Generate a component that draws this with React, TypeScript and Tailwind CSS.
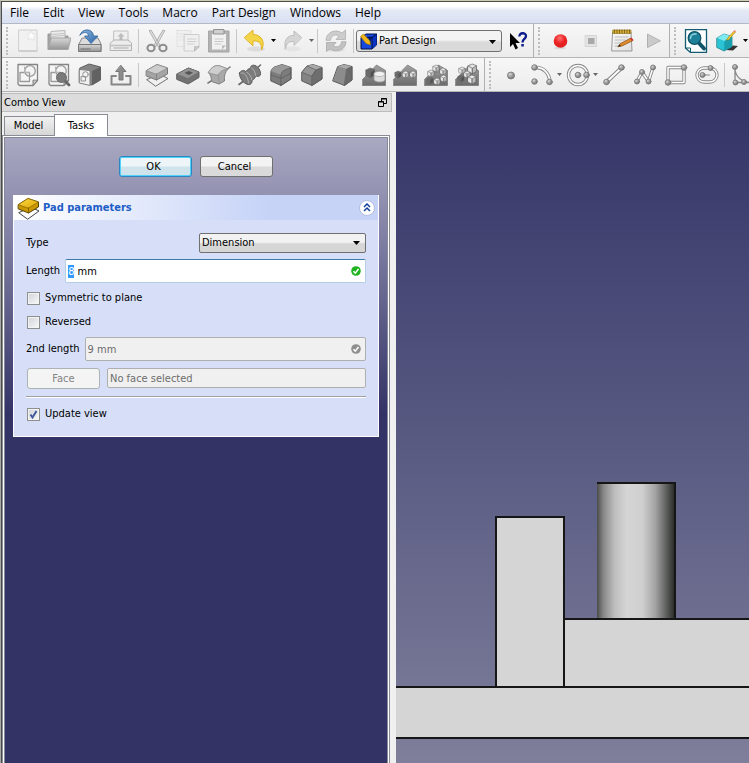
import { useEffect, useRef, type ReactNode } from "react";

const UI_FONT = "font-['DejaVu_Sans_Condensed','DejaVu_Sans',sans-serif]";

/* ---------- shared bits ---------- */

function Icon({ children }: { children: ReactNode }) {
  return (
    <svg viewBox="0 0 24 24" className="block size-6 shrink-0" fill="none" strokeLinejoin="round" strokeLinecap="round">
      {children}
    </svg>
  );
}

function Tool({ label, children }: { label: string; children: ReactNode }) {
  return (
    <button type="button" aria-label={label} className="flex h-8 w-[31px] shrink-0 items-center justify-center">
      <Icon>{children}</Icon>
    </button>
  );
}

function DropArrow({ label, dark = false, narrow = false }: { label: string; dark?: boolean; narrow?: boolean }) {
  return (
    <button
      type="button"
      aria-label={label}
      className={`flex h-8 shrink-0 items-center justify-center ${narrow ? "w-[5px]" : "w-[7px]"}`}
    >
      <svg viewBox="0 0 5 3" className="block h-[3px] w-[5px] shrink-0">
        <path d="M0 0h5L2.500 3z" fill={dark ? "#000" : "#666"} />
      </svg>
    </button>
  );
}

function Handle() {
  return (
    <div className="flex w-[10px] shrink-0 items-center justify-center">
      <div className="h-7 border-l-2 border-dotted border-[#bdbdbd]" />
    </div>
  );
}

function Separator() {
  return (
    <div className="flex w-[5px] shrink-0 items-center justify-center">
      <div className="h-6 w-px bg-[#c8c8c8]" />
    </div>
  );
}

function Edge() {
  return <div className="h-full w-px shrink-0 bg-[#b0b0b0]" />;
}

function Gradients() {
  return (
    <svg className="absolute size-0" aria-hidden="true">
      <defs>
        <radialGradient id="ball" cx="35%" cy="30%" r="75%">
          <stop offset="0" stopColor="#d8d8d8" />
          <stop offset="0.6" stopColor="#949494" />
          <stop offset="1" stopColor="#727272" />
        </radialGradient>
        <radialGradient id="red" cx="45%" cy="30%" r="75%">
          <stop offset="0" stopColor="#ff7373" />
          <stop offset="0.5" stopColor="#ec2222" />
          <stop offset="1" stopColor="#d92020" />
        </radialGradient>
        <linearGradient id="paper" x1="0" y1="0" x2="1" y2="1">
          <stop offset="0" stopColor="#fafafa" />
          <stop offset="1" stopColor="#dedede" />
        </linearGradient>
        <linearGradient id="metal" x1="0" y1="0" x2="0" y2="1">
          <stop offset="0" stopColor="#d8d8d8" />
          <stop offset="1" stopColor="#949494" />
        </linearGradient>
        <linearGradient id="darkface" x1="0" y1="0" x2="0" y2="1">
          <stop offset="0" stopColor="#a0a0a0" />
          <stop offset="1" stopColor="#6c6c6c" />
        </linearGradient>
        <linearGradient id="gold" x1="0" y1="0" x2="1" y2="1">
          <stop offset="0" stopColor="#fbdc4a" />
          <stop offset="1" stopColor="#e0a400" />
        </linearGradient>
        <linearGradient id="blue" x1="0" y1="0" x2="1" y2="1">
          <stop offset="0" stopColor="#8db8de" />
          <stop offset="1" stopColor="#2f66a8" />
        </linearGradient>
      </defs>
    </svg>
  );
}

function Ball({ x, y, r = 2.8 }: { x: number; y: number; r?: number }) {
  return <circle cx={x} cy={y} r={r} fill="url(#ball)" stroke="#7c7c7c" strokeWidth="0.9" />;
}

function SketchPage() {
  return (
    <>
      <path d="M2 1.500h19.500v16L17 22.500H3.500L2 21z" fill="#f4f4f4" stroke="#858585" strokeWidth="1.300" />
      <path d="M21.500 17.500L17 22.500v-5z" fill="#c4c4c4" stroke="#808080" />
      <rect x="4" y="9.500" width="9.500" height="9" stroke="#9a9a9a" strokeWidth="1.300" />
      <circle cx="14" cy="8" r="5.300" stroke="#9a9a9a" strokeWidth="1.300" />
      <path d="M8.500 9.500V4M13.500 9.500H9" stroke="#b4b4b4" />
    </>
  );
}

function MiniCube({ x, y, dark = false, s = 1 }: { x: number; y: number; dark?: boolean; s?: number }) {
  return (
    <g transform={`translate(${x} ${y}) scale(${s})`} stroke="#666" strokeWidth="0.5">
      <path d="M0 1.500L3 0l3 1.200v4L3.200 7 0 5.500z" fill={dark ? "#6c6c6c" : "#e8e8e8"} />
      <path d="M3.200 3L6 1.200v4L3.200 7z" fill={dark ? "#505050" : "#bcbcbc"} />
      <path d="M0 1.500L3.200 3v4" />
    </g>
  );
}

function Wedge() {
  return <path d="M.5 16.500L14.500 2l9 5.500v15H.5z" fill="url(#darkface)" stroke="#7a7a7a" strokeWidth="0.8" />;
}

/* ---------- menu and toolbars ---------- */

function MenuBar() {
  const items = ["File", "Edit", "View", "Tools", "Macro", "Part Design", "Windows", "Help"];
  return (
    <nav className="flex h-[22px] items-center gap-3.5 border-b border-[#b5b9c6] bg-linear-to-b from-white from-20% via-[#e4e9f5] via-40% to-[#d8e0f3] pl-2 font-['Open_Sans','Noto_Sans',sans-serif] text-xs text-black">
      {items.map((item) => (
        <button key={item} type="button" className="shrink-0">
          {item}
        </button>
      ))}
    </nav>
  );
}

function FileToolBar() {
  return (
    <div className="flex h-[34px] items-center overflow-hidden border-b border-[#b4b4b4] bg-linear-to-b from-[#f7f7f7] to-[#ececec]">
      <Handle />
      <Tool label="New">
        <path d="M3 1h18v21H3z" fill="#f1f1f1" stroke="#cfcfcf" />
        <path d="M15 2l1.500 3 3.500.5-2.500 2.500.5 3.500-3-2-3 1.500 1-3.500L11 5l3-.5z" fill="#fcfcfc" stroke="#dadada" strokeWidth="0.6" />
        <path d="M3 22h18" stroke="#bdbdbd" />
      </Tool>
      <Tool label="Open">
        <path d="M1 20V5h8l2 2h10v13z" fill="#a4a4a4" stroke="#999" />
        <path d="M4 9V2.500l14-1V9" fill="#ececec" stroke="#b5b5b5" />
        <path d="M5 5.500l12-1M5 7.500l12-1" stroke="#c2c2c2" />
        <path d="M4.500 9H24l-3 11.500H1.500z" fill="url(#metal)" stroke="#a4a4a4" />
      </Tool>
      <Tool label="Save">
        <path d="M1 15l3-6h16l3 6v7.500H1z" fill="#dcdcdc" stroke="#888" />
        <path d="M1 15.500h22v7H1z" fill="url(#metal)" stroke="#777" />
        <path d="M3 20h10" stroke="#666" strokeDasharray="1 1" />
        <path d="M2 6C4-1 15-1 15.500 7H20l-7 7.500L6.500 7h4C10 3 6 2 2 6z" fill="url(#blue)" stroke="#2f66a0" strokeWidth="0.8" />
      </Tool>
      <Tool label="Print">
        <path d="M5 2h14v11H5z" fill="#efefef" stroke="#c2c2c2" />
        <path d="M12 4l3.500 3.500h-2V11h-3V7.500h-2z" fill="#bcbcbc" />
        <path d="M1.500 14L5 11h14l3.500 3v7.500h-21z" fill="#ececec" stroke="#b2b2b2" />
        <path d="M2 16.500h20M5 19h14" stroke="#c0c0c0" strokeWidth="1.300" />
      </Tool>
      <Separator />
      <Tool label="Cut">
        <path d="M4.500 1.500L6 1l9.500 16-2 .5zM19.500 1.500L18 1 8.500 17l2 .5z" fill="#e0e0e0" stroke="#a0a0a0" strokeWidth="0.8" />
        <ellipse cx="6" cy="19" rx="3.600" ry="3.200" stroke="#8e8e8e" strokeWidth="2" />
        <ellipse cx="18" cy="19" rx="3.600" ry="3.200" stroke="#8e8e8e" strokeWidth="2" />
      </Tool>
      <Tool label="Copy">
        <path d="M1 1.500h14v16H1z" fill="#f0f0f0" stroke="#dcdcdc" strokeDasharray="2 1.500" />
        <path d="M3 5h9M3 8h9M3 11h9" stroke="#e2e2e2" />
        <path d="M8.500 5.500H23V18l-4.500 4h-10z" fill="#efefef" stroke="#cdcdcd" />
        <path d="M11.500 10H20M11.500 12.500H20M11.500 15H18" stroke="#d0d0d0" />
        <path d="M23 18l-4.500 4v-4z" fill="#ccc" stroke="#bbb" />
      </Tool>
      <Tool label="Paste">
        <path d="M2 2h20v21H2z" fill="#b4b4b4" stroke="#a2a2a2" />
        <path d="M5 5h14v15.500H5z" fill="#f1f1f1" />
        <path d="M7 .5h10V5H7z" fill="#cfcfcf" stroke="#909090" />
        <path d="M8 10h8M8 12.500h8M8 15h6" stroke="#c8c8c8" />
        <path d="M19 16.500l-4 4v-4z" fill="#bbb" />
      </Tool>
      <Separator />
      <Tool label="Undo">
        <ellipse cx="13" cy="20" rx="9" ry="2.500" fill="#dcdcdc" />
        <path d="M1.500 8.500L10 1v4.500c8 0 13 7 8.500 15.500C19 14 15.500 11.500 10 12v4.500z" fill="#f5d548" stroke="#dfb428" />
      </Tool>
      <DropArrow label="Undo history" dark />
      <Tool label="Redo">
        <ellipse cx="11" cy="20" rx="9" ry="2.500" fill="#e4e4e4" />
        <path d="M20.500 8.500L13 2v4.500C6 6 2.500 12 4.500 20 5.500 14 8 12 13 12.500V16z" fill="#d5d5d5" stroke="#bcbcbc" />
      </Tool>
      <DropArrow label="Redo history" />
      <Separator />
      <Tool label="Refresh">
        <ellipse cx="12" cy="21" rx="9" ry="2" fill="#e0e0e0" />
        <path d="M2 11C2 3 12-.5 18 4l3.500-3v9.500H12L15 7C10.500 4.500 7 7 6.500 11z" fill="#cdcdcd" stroke="#b0b0b0" strokeWidth="0.8" />
        <path d="M22 13c0 8-10 11-16 7l-3.500 2.500V13.500H12L9 17c4.500 2 8 0 8.500-4z" fill="#c2c2c2" stroke="#aaa" strokeWidth="0.8" />
      </Tool>
      <Separator />
      <div className="relative w-[146px] shrink-0">
        <select
          aria-label="Workbench"
          className={`block h-[22px] w-full appearance-none rounded-[3px] border border-[#707070] bg-linear-to-b from-[#f4f4f4] from-45% to-[#dadada] to-55% pt-px pl-[22px] text-[11px] text-black ${UI_FONT}`}
        >
          <option>Part Design</option>
        </select>
        <svg viewBox="0 0 18 17" className="pointer-events-none absolute top-[3px] left-1 h-[17px] w-[18px]">
          <path d="M1 4.500L6 1h10.500v11L12 16H1z" fill="#1748e0" stroke="#001046" />
          <path d="M12 4.500L16.500 1v11L12 16z" fill="#0b35c0" />
          <path d="M1 4.500h11V16M12 4.500L16.500 1" stroke="#001046" fill="none" />
          <path d="M7.500 4.500h5M10 4.500V12" stroke="#001046" strokeWidth="1.500" fill="none" />
          <path d="M.5 3.500L3.500 1l6.500 7 .5 4-4.500-1.500z" fill="#f1b51c" stroke="#9c7300" strokeWidth="0.6" />
        </svg>
        <svg viewBox="0 0 7 4" className="pointer-events-none absolute top-[10px] right-[6px] h-1 w-[7px]">
          <path d="M0 0h7L3.500 4z" fill="#000" />
        </svg>
      </div>
      <Tool label="What's this?">
        <path d="M4 4v14l3-3 2.500 5.500 2.500-1.500L9.500 14H14z" fill="#000" />
        <path d="M13.500 7.500C13 3.500 20 3 20 7c0 3-3.500 3-3.500 6.500" stroke="#0c1a8c" strokeWidth="2.300" strokeLinecap="butt" />
        <path d="M15.300 15h2.500v2.500h-2.500z" fill="#0c1a8c" />
      </Tool>
      <Edge />
      <Handle />
      <Tool label="Record macro">
        <ellipse cx="12" cy="19" rx="6" ry="1.500" fill="#dcdcdc" />
        <circle cx="12.500" cy="12" r="6.800" fill="url(#red)" />
      </Tool>
      <Tool label="Stop macro">
        <path d="M6.500 6.500h11v11h-11z" fill="#e4e4e4" stroke="#d4d4d4" />
        <path d="M9 9h6.500v6H9z" fill="#a9a9a9" />
      </Tool>
      <Tool label="Macros">
        <path d="M3 3h18l1 19H2z" fill="url(#paper)" stroke="#9a9a9a" />
        <path d="M3 1h18v3.500H3z" fill="#d9b13a" stroke="#8a6a12" strokeWidth="0.6" />
        <path d="M4.500 1v3M7 1v3M9.500 1v3M12 1v3M14.500 1v3M17 1v3M19.500 1v3" stroke="#6f5510" strokeWidth="0.8" />
        <path d="M5 8h13M5 11h10M5 14h7M5 17h5" stroke="#bcbcbc" />
        <path d="M8 17.500l2.500-3L21 9l2 2.500-11 5.500z" fill="#e38a2d" stroke="#7c4a10" strokeWidth="0.7" />
        <path d="M8 17.500l1.500-2 1.500 1.500z" fill="#222" />
        <path d="M20 9.500l1.500-1L23.500 11 22 12z" fill="#c33" />
      </Tool>
      <Tool label="Execute macro">
        <path d="M6.500 5.500v13L19 12z" fill="#cacaca" stroke="#b0b0b0" />
      </Tool>
      <div className="w-px shrink-0" />
      <Edge />
      <Handle />
      <Tool label="Fit all">
        <path d="M1.500.5h21v23h-16l-5-4.500z" fill="#fff" stroke="#135d70" strokeWidth="1.300" />
        <path d="M1.500 19h5v4.500" stroke="#135d70" />
        <path d="M14 13l6 6.500" stroke="#0f5468" strokeWidth="4" />
        <circle cx="10.500" cy="9" r="6.300" fill="#1f8197" stroke="#0f5468" strokeWidth="1.300" />
        <path d="M6.500 9.500C6.500 6 9 4.500 12 5" stroke="#8fd3e0" strokeWidth="1.500" />
      </Tool>
      <Tool label="Draw style">
        <path d="M11 21l7-4.500 5 .5-5 4.500z" fill="#333" />
        <path d="M2 9l7-4 8 2.500v10L9 22l-7-3.500z" fill="#2cc4d4" stroke="#16808c" strokeWidth="0.8" />
        <path d="M2 9l7-4 8 2.500L9.500 12z" fill="#7feaf2" />
        <path d="M9.500 12L17 7.500v10L9 22z" fill="#1a9fae" />
        <path d="M11.500 10.500L19 2l1.500 1-7 8z" fill="#f6c62c" stroke="#9a7300" strokeWidth="0.5" />
        <path d="M18.500 2.500L19.500 1l1.500 1-1 1.500z" fill="#f08a7c" />
      </Tool>
      <DropArrow label="Draw style options" dark />
    </div>
  );
}

function PartToolBar() {
  return (
    <div className="flex h-[34px] items-center overflow-hidden border-b border-[#b4b4b4] bg-linear-to-b from-[#f7f7f7] to-[#ececec]">
      <Handle />
      <Tool label="Create sketch">
        <SketchPage />
      </Tool>
      <Tool label="View sketch">
        <SketchPage />
        <path d="M17 17l5 5" stroke="#666" strokeWidth="2.800" />
        <circle cx="14.500" cy="14.500" r="5" fill="#7a7a7a" stroke="#6a6a6a" />
      </Tool>
      <Tool label="Map sketch to face">
        <path d="M2 5l9-4 11.500 3v13L14 22 2 19z" fill="#858585" stroke="#606060" />
        <path d="M14 8l8.500-4v13L14 22z" fill="#626262" />
        <path d="M1.500 6.500l10.500 1v15L1.500 20z" fill="#f0f0f0" stroke="#808080" />
        <circle cx="7.500" cy="11.500" r="2.800" stroke="#909090" />
        <path d="M3.500 13.500h4v4.500h-4z" stroke="#909090" />
      </Tool>
      <Tool label="Leave sketch">
        <path d="M7 13H2.500v8.500h19V13H17" stroke="#868686" strokeWidth="2" />
        <path d="M12 2.500l5 6h-3V17h-4V8.500H7z" fill="#8c8c8c" stroke="#787878" />
      </Tool>
      <Separator />
      <Tool label="Pad">
        <path d="M2 16.500L14 11l9 4.500L11 23z" fill="#f0f0f0" stroke="#707070" />
        <path d="M1.500 7.500L12 1.500 22.500 5v6l-11 6-10-4z" fill="#a4a4a4" stroke="#787878" />
        <path d="M1.500 7.500L12 1.500 22.500 5l-11 6z" fill="#cdcdcd" stroke="#8a8a8a" strokeWidth="0.7" />
        <path d="M11.500 11v6" stroke="#777" strokeWidth="0.7" />
      </Tool>
      <Tool label="Pocket">
        <path d="M1 11L12.500 5l10.500 4v5.500L12 21 1 16.500z" fill="#727272" stroke="#606060" />
        <path d="M1 11L12.500 5 23 9l-11 6.500z" fill="#949494" stroke="#6e6e6e" strokeWidth="0.7" />
        <path d="M8.500 10L12.500 8l4.500 1.500-4 2.500z" fill="#545454" />
      </Tool>
      <Tool label="Revolution">
        <path d="M1 20L5 17.500M18 8l5-4" stroke="#7a7a7a" strokeWidth="1.600" />
        <path d="M1.500 9.500C4 4 9 1.500 13 3l8 3c-3 3-4 7-3.500 12L12 21 4.500 18.500C4.500 14.500 3.500 11.500 1.500 9.500z" fill="#a8a8a8" stroke="#808080" />
        <path d="M1.500 9.500C4 4 9 1.500 13 3l8 3c-4 0-8 2-10 6z" fill="#cecece" stroke="#909090" strokeWidth="0.7" />
        <path d="M11 12c1 2.500 1.200 5.500 1 9" stroke="#909090" strokeWidth="0.8" />
      </Tool>
      <Tool label="Groove">
        <path d="M1 21.500l4-3M18 6l4.500-4" stroke="#666" strokeWidth="1.600" />
        <path d="M1.500 10c1.500-3 5-3.500 6.500-1 .5-2 2.500-3.500 4.500-3.500C12 3 14.500 1.500 17 2.500c3 1 6 5 5.500 9.500-1.500 2-4 1.500-5 .5 0 2.500-1.500 4-3.500 4.500.5 3-1.500 5-4 4.500C5.500 20.500 1 15 1.500 10z" fill="#7c7c7c" stroke="#5a5a5a" />
        <path d="M3 10c3-1 7 3 7.500 10M8.500 9c2 1 5 4 5.500 8M13.500 5c2 1 4 4 4 7.500" stroke="#b0b0b0" />
      </Tool>
      <Tool label="Fillet">
        <path d="M2 8c1-3 3-4 5-4.500L13 1.500l9 3V16L12 22.500 2 18z" fill="#7c7c7c" stroke="#5a5a5a" />
        <path d="M2 8c1-3 3-4 5-4.500L13 1.500l9 3-6 2.500c-2.500 1-4 2.500-4 5z" fill="#999" />
        <path d="M12 12c0-2.500 1.500-4 4-5l6-2.500V16L12 22.500zM2 12l10 3.500L22 10" stroke="#5a5a5a" strokeWidth="0.7" />
      </Tool>
      <Tool label="Chamfer">
        <path d="M2 9l5-6 6-1.500 9 3V16L12 22.500 2 18z" fill="#848484" stroke="#5a5a5a" />
        <path d="M7 3l6-1.500 9 3L16 7z" fill="#a8a8a8" />
        <path d="M2 9l5-6 9 4-4 6z" fill="#949494" stroke="#626262" strokeWidth="0.7" />
        <path d="M12 13l4-6 6-2.500V16L12 22.500z" fill="#6e6e6e" stroke="#5a5a5a" strokeWidth="0.7" />
      </Tool>
      <Tool label="Draft">
        <path d="M7 3.500L13 1.500l8 2V17l-7.500 5.500L2 18z" fill="#8c8c8c" stroke="#5a5a5a" />
        <path d="M7 3.500L13 1.500l8 2-5 2.500z" fill="#a9a9a9" />
        <path d="M16 6l5-2.500V17l-7.500 5.500z" fill="#6a6a6a" stroke="#5a5a5a" strokeWidth="0.7" />
      </Tool>
      <Tool label="Mirrored">
        <Wedge />
        <MiniCube x={4} y={5} s={1.4} dark />
        <path d="M12 11c0-3.500 11-3.500 11 0v5.500c0 3.500-11 3.500-11 0z" fill="#dcdcdc" stroke="#909090" strokeWidth="0.8" />
        <ellipse cx="17.500" cy="11" rx="5.500" ry="2.600" fill="#f0f0f0" stroke="#a0a0a0" strokeWidth="0.6" />
      </Tool>
      <Tool label="Linear pattern">
        <path d="M.5 16.500L14.500 2l9 5.500v15H.5z" fill="url(#darkface)" stroke="#7a7a7a" strokeWidth="0.8" />
        <MiniCube x={2} y={8} dark />
        <MiniCube x={9.500} y={8} />
        <MiniCube x={17} y={8} />
      </Tool>
      <Tool label="Polar pattern">
        <Wedge />
        <MiniCube x={9} y={2} />
        <MiniCube x={16} y={5} />
        <MiniCube x={4} y={7} />
        <MiniCube x={16.500} y={12} />
        <MiniCube x={10} y={15} />
        <MiniCube x={3} y={14} dark />
      </Tool>
      <Tool label="Multi transform">
        <Wedge />
        <MiniCube x={13} y={1} s={1.4} />
        <MiniCube x={4} y={4} />
        <MiniCube x={3} y={12} dark />
        <MiniCube x={9} y={8} />
        <MiniCube x={13} y={12} s={1.3} />
      </Tool>
      <div className="w-0.5 shrink-0" />
      <Edge />
      <Handle />
      <Tool label="Point">
        <Ball x={12} y={12.500} r={3.500} />
      </Tool>
      <Tool label="Arc">
        <path d="M5 4.500c8-.5 14 5 15 14" stroke="#888" strokeWidth="3.500" />
        <path d="M5 4.500c8-.5 14 5 15 14" stroke="#fff" strokeWidth="1.700" />
        <Ball x={4.500} y={4.500} />
        <Ball x={4.500} y={18.500} />
        <Ball x={19.500} y={19} />
      </Tool>
      <DropArrow label="Arc options" narrow />
      <Tool label="Circle">
        <circle cx="12" cy="12" r="9.500" stroke="#888" strokeWidth="3.300" />
        <circle cx="12" cy="12" r="9.500" stroke="#fff" strokeWidth="1.600" />
        <Ball x={12} y={12} />
        <Ball x={20.500} y={12} />
      </Tool>
      <DropArrow label="Circle options" narrow />
      <Tool label="Line">
        <path d="M4.500 19L20 4.500" stroke="#888" strokeWidth="4" />
        <path d="M4.500 19L20 4.500" stroke="#fff" strokeWidth="1.800" />
        <Ball x={4.500} y={19} />
        <Ball x={19.500} y={4.500} />
      </Tool>
      <Tool label="Polyline">
        <path d="M4 18.500L9 9l6.500 9.500L20 4.500" stroke="#888" strokeWidth="3.300" />
        <path d="M4 18.500L9 9l6.500 9.500L20 4.500" stroke="#fff" strokeWidth="1.500" />
        <Ball x={4} y={18.500} r={2.500} />
        <Ball x={9} y={9} r={2.500} />
        <Ball x={15.500} y={18.500} r={2.500} />
        <Ball x={20} y={4.500} r={2.500} />
      </Tool>
      <Tool label="Rectangle">
        <path d="M4 4.500h16v15H4z" stroke="#888" strokeWidth="3.300" />
        <path d="M4 4.500h16v15H4z" stroke="#fff" strokeWidth="1.500" />
        <Ball x={20} y={4.500} />
        <Ball x={4} y={19.500} />
      </Tool>
      <Tool label="Slot">
        <rect x="2" y="5" width="20" height="14" rx="7" stroke="#888" strokeWidth="3.300" />
        <rect x="2" y="5" width="20" height="14" rx="7" stroke="#fff" strokeWidth="1.500" />
        <path d="M7.500 12h7" stroke="#888" />
        <Ball x={7.500} y={12} r={2.500} />
        <Ball x={15.500} y={5} r={2.500} />
      </Tool>
      <Separator />
      <Tool label="Fillet sketch">
        <path d="M4 4v15.500h18M4 7c1 7 7 12 15 12.500" stroke="#888" strokeWidth="1.300" />
        <Ball x={4} y={4} r={2.500} />
        <Ball x={4.500} y={19.500} r={2.500} />
        <Ball x={13} y={19} r={2.500} />
      </Tool>
    </div>
  );
}

/* ---------- task panel ---------- */

function CheckBox({ id, label, checked = false }: { id: string; label: string; checked?: boolean }) {
  return (
    <div className="flex h-6 items-center gap-[5px] pl-px">
      <span className="relative block size-[13px]">
        <input
          id={id}
          type="checkbox"
          defaultChecked={checked}
          className="peer block size-[13px] appearance-none border border-[#8e8f8f] bg-linear-to-br from-[#cfd2d8] to-[#fafafa] shadow-[inset_0_0_0_1px_#f4f4f4]"
        />
        <svg viewBox="0 0 13 13" className="pointer-events-none invisible absolute inset-0 size-[13px] peer-checked:visible">
          <path d="M3.500 6.500L5.500 9.500 9.500 3" fill="none" stroke="#40589c" strokeWidth="2" />
        </svg>
      </span>
      <label htmlFor={id}>{label}</label>
    </div>
  );
}

function Valid({ fill }: { fill: string }) {
  return (
    <svg viewBox="0 0 10 10" className="pointer-events-none absolute top-[7px] right-[5px] size-[10px]">
      <circle cx="5" cy="5" r="4.800" fill={fill} />
      <path d="M2.500 5.200l1.800 2L7.500 3" fill="none" stroke="#fff" strokeWidth="1.500" />
    </svg>
  );
}

function PadParameters() {
  const length = useRef<HTMLInputElement>(null);
  useEffect(() => {
    length.current?.focus();
    length.current?.setSelectionRange(0, 1);
  }, []);

  return (
    <section className="mx-2 mt-[18px] border border-t-0 border-white bg-[#d6dff7]">
      <header className="flex h-[25px] items-center bg-linear-to-r from-white to-[#c6d3f7] to-70% pr-[3px] pl-[3px]">
        <Icon>
          <path d="M2 16.500L14 11l8 4L11 23z" fill="#fff" stroke="#444" />
          <path d="M1.500 8.500L11 2.500 21.500 6v5L11.500 17l-10-4z" fill="#c99700" stroke="#5a4300" />
          <path d="M1.500 8.500L11 2.500 21.500 6l-10 6z" fill="url(#gold)" stroke="#8a6800" strokeWidth="0.7" />
          <path d="M11.500 12v5" stroke="#6d5200" strokeWidth="0.7" />
        </Icon>
        <h2 className="ml-0.5 flex-1 pt-px font-bold text-[#215dc6]">Pad parameters</h2>
        <button
          type="button"
          aria-label="Collapse"
          className="flex size-4 items-center justify-center rounded-full border border-[#b4bfdf] bg-white"
        >
          <svg viewBox="0 0 8 9" className="block h-[9px] w-2 shrink-0" fill="none" stroke="#1240a0" strokeWidth="1.500">
            <path d="M1 4l3-3 3 3M1 8l3-3 3 3" />
          </svg>
        </button>
      </header>

      <div className="pt-[13px] pr-3 pb-2.5 pl-3">
        <div className="flex h-5 items-center justify-between">
          <label htmlFor="type">Type</label>
          <div className="relative w-[167px]">
            <select
              id="type"
              className="block h-5 w-full appearance-none rounded-[2px] border border-[#707070] bg-linear-to-b from-[#f2f2f2] from-45% to-[#d6d6d6] to-55% pl-0.5"
            >
              <option>Dimension</option>
            </select>
            <svg viewBox="0 0 7 4" className="pointer-events-none absolute top-2 right-[6px] h-1 w-[7px]">
              <path d="M0 0h7L3.500 4z" fill="#000" />
            </svg>
          </div>
        </div>

        <div className="mt-[6px] flex h-6 items-center gap-[5px]">
          <label htmlFor="length" className="shrink-0">
            Length
          </label>
          <div className="relative flex-1">
            <input
              id="length"
              ref={length}
              defaultValue="8 mm"
              className="block h-6 w-full rounded-[2px] border border-[#b5cfe7] border-t-[#3d7bad] bg-white pl-0.5 outline-none selection:bg-[#3399ff] selection:text-white"
            />
            <Valid fill="#1fb41f" />
          </div>
        </div>

        <div className="mt-[3px]">
          <CheckBox id="symmetric" label="Symmetric to plane" />
          <CheckBox id="reversed" label="Reversed" />
        </div>

        <div className="mt-[3px] flex h-6 items-center gap-[5px]">
          <label htmlFor="length2" className="shrink-0">
            2nd length
          </label>
          <div className="relative flex-1">
            <input
              id="length2"
              disabled
              defaultValue="9 mm"
              className="block h-6 w-full rounded-[2px] border border-[#afafaf] bg-[#f0f0f0] pl-0.5 text-[#6d6d6d]"
            />
            <Valid fill="#8f8f8f" />
          </div>
        </div>

        <div className="mt-[7px] flex items-start gap-[7px] pl-px">
          <button
            type="button"
            disabled
            className="h-[21px] w-[73px] shrink-0 rounded-[3px] border border-[#adb2b5] bg-[#f4f4f4] text-[#838383]"
          >
            Face
          </button>
          <input
            aria-label="Selected face"
            disabled
            defaultValue="No face selected"
            className="block h-5 min-w-0 flex-1 rounded-[2px] border border-[#afafaf] bg-[#f0f0f0] pl-0.5 text-[#6d6d6d]"
          />
        </div>

        <hr className="mt-[7px] mb-1 h-0.5 border-t border-b border-t-[#a0a0a0] border-b-white" />
        <CheckBox id="update" label="Update view" checked />
      </div>
    </section>
  );
}

function ComboView() {
  return (
    <aside
      className={`flex w-[394px] shrink-0 flex-col bg-[#f0f0f0] pt-px pr-[6px] text-[11px] leading-[18px] text-black ${UI_FONT}`}
    >
      <div className="mr-[-2px] flex h-[19px] items-center justify-between border border-l-0 border-[#bcbcbc] bg-[#dcdcdc] pr-1 pl-0.5">
        <span className="pt-px">Combo View</span>
        <button type="button" aria-label="Float panel">
          <svg viewBox="0 0 9 9" className="block size-[9px]" fill="none" stroke="#000">
            <path d="M3.500 3V.5h5v5H6M3 1h6" />
            <path d="M.5 3.500h5v5h-5zM0 4h6" />
          </svg>
        </button>
      </div>

      <div role="tablist" className="mt-0.5 flex items-end pl-0.5">
        <button
          type="button"
          role="tab"
          aria-selected="false"
          className="h-[19px] w-[50px] border border-r-0 border-b-0 border-[#898c95] bg-linear-to-b from-[#f2f2f2] to-[#d6d6d6] pr-0.5"
        >
          Model
        </button>
        <button
          type="button"
          role="tab"
          aria-selected="true"
          className="relative z-10 -mb-px h-[22px] w-[54px] border border-b-0 border-[#898c95] bg-white"
        >
          Tasks
        </button>
      </div>

      <div className="flex flex-1 border border-b-0 border-[#898c95] bg-white px-px pt-px">
        <div className="flex-1 border border-b-0 border-[#85889a] bg-[linear-gradient(to_bottom,#a9a9c2_0px,#9190b0_60px,#807fa4_100px,#333366_275px)] pt-[18px]">
          <div className="flex justify-center gap-2">
            <button
              type="button"
              className="flex h-[21px] w-[73px] items-center justify-center rounded-[3px] border border-[#2c86c2] bg-linear-to-b from-[#edf5f9] from-45% to-[#cfe3ec] to-55% pt-px pr-1 shadow-[inset_0_0_0_1px_#4fd3fa]"
            >
              OK
            </button>
            <button
              type="button"
              className="flex h-[21px] w-[73px] items-center justify-center rounded-[3px] border border-[#707070] bg-linear-to-b from-[#f3f3f3] from-45% to-[#dadada] to-55% pt-px pr-1"
            >
              Cancel
            </button>
          </div>
          <PadParameters />
        </div>
      </div>
    </aside>
  );
}

/* ---------- 3D view ---------- */

function Viewport() {
  return (
    <main className="min-w-0 flex-1 overflow-hidden bg-linear-to-b from-[#333366] to-[#7f7f9b]">
      <svg className="block h-full w-full" role="img" aria-label="Model, front view">
        <defs>
          <linearGradient id="cylinder">
            <stop offset="0" stopColor="#4a4c4a" />
            <stop offset="0.08" stopColor="#868686" />
            <stop offset="0.22" stopColor="#bcbcbc" />
            <stop offset="0.38" stopColor="#d5d5d5" />
            <stop offset="0.58" stopColor="#d0d0d0" />
            <stop offset="0.75" stopColor="#a2a2a2" />
            <stop offset="0.9" stopColor="#585a58" />
            <stop offset="1" stopColor="#262826" />
          </linearGradient>
        </defs>
        <g stroke="#161616" strokeWidth="2">
          <rect x="201" y="391" width="78" height="140" fill="url(#cylinder)" stroke="none" />
          <path d="M201 391h78v136" fill="none" />
          <rect x="168" y="527" width="200%" height="68" fill="#d5d5d5" />
          <rect x="100" y="425" width="68" height="170" fill="#d5d5d5" />
          <rect x="-4" y="595" width="200%" height="51" fill="#d5d5d5" />
        </g>
      </svg>
    </main>
  );
}

export default function App() {
  return (
    <div className="h-screen border-t border-l border-t-[#cfccb8] border-l-[#a4a9a8] bg-[#f0f0f0]">
      <Gradients />
      <div className="flex h-full flex-col border-t border-l border-[#4c4c48]">
        <MenuBar />
        <FileToolBar />
        <PartToolBar />
        <div className="flex min-h-0 flex-1">
          <ComboView />
          <Viewport />
        </div>
      </div>
    </div>
  );
}
